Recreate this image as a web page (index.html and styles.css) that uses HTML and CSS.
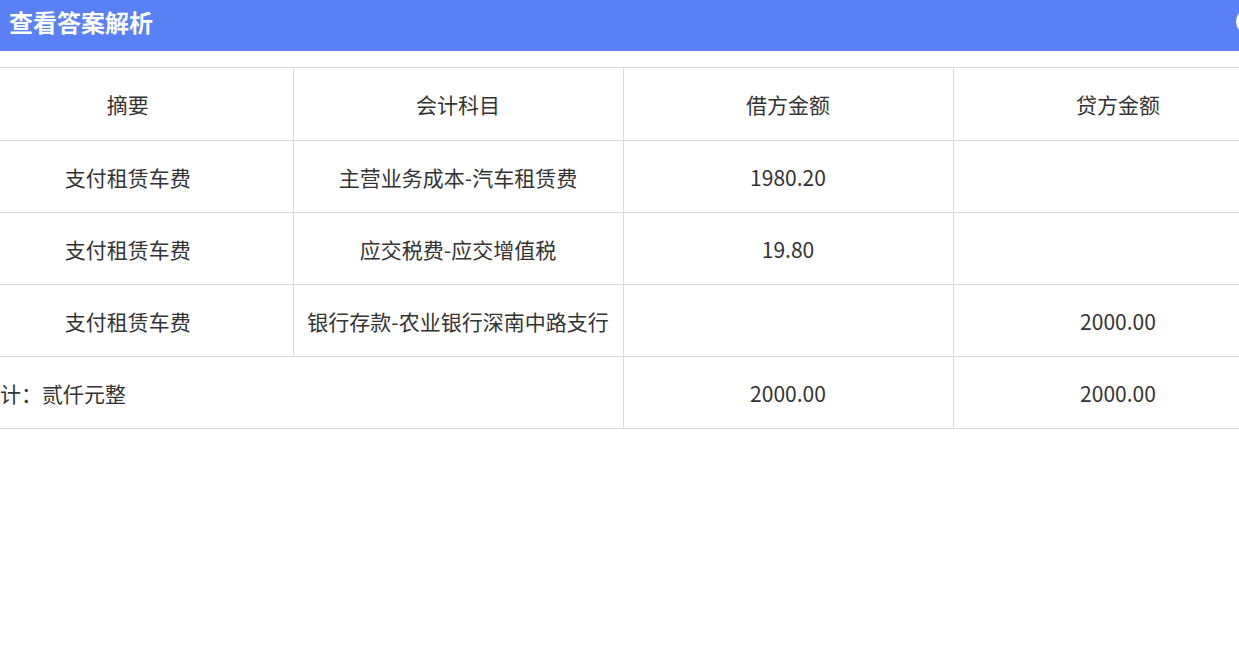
FILE: index.html
```html
<!DOCTYPE html>
<html lang="zh-CN">
<head>
<meta charset="utf-8">
<link rel="stylesheet" href="styles.css">
</head>
<body>
<div class="dialog">
  <div class="header">
    <span class="title">查看答案解析</span>
    <span class="close"></span>
  </div>
  <div class="body">
    <table class="voucher">
      <colgroup><col class="c"><col class="c"><col class="c"><col class="c"></colgroup>
      <thead>
        <tr><th>摘要</th><th>会计科目</th><th>借方金额</th><th>贷方金额</th></tr>
      </thead>
      <tbody>
        <tr><td>支付租赁车费</td><td>主营业务成本-汽车租赁费</td><td>1980.20</td><td></td></tr>
        <tr><td>支付租赁车费</td><td>应交税费-应交增值税</td><td>19.80</td><td></td></tr>
        <tr><td>支付租赁车费</td><td>银行存款-农业银行深南中路支行</td><td></td><td>2000.00</td></tr>
        <tr class="total"><td colspan="2" class="total-label">合计：贰仟元整</td><td>2000.00</td><td>2000.00</td></tr>
      </tbody>
    </table>
  </div>
</div>
</body>
</html>
```

FILE: styles.css
```css
html, body {
  margin: 0;
  padding: 0;
  background: #fff;
  overflow: hidden;
}
body {
  font-family: "Noto Sans CJK SC", "Noto Sans", sans-serif;
  color: #333;
}
.dialog {
  width: 1239px;
  height: 666px;
  position: relative;
  overflow: hidden;
}
.header {
  height: 51px;
  box-sizing: border-box;
  background: #5a80f6;
  display: flex;
  align-items: flex-start;
  padding: 6px 0 0 9px;
  position: relative;
}
.title {
  color: #fff;
  font-size: 24px;
  line-height: 32px;
  font-weight: bold;
}
.close {
  position: absolute;
  left: 1236px;
  top: 8px;
  width: 27px;
  height: 27px;
  border-radius: 50%;
  background: #fff;
}
.body {
  padding-top: 16px;
  margin-left: -37px;
}
.voucher {
  border-collapse: collapse;
  table-layout: fixed;
  width: 1320px;
}
.voucher .c {
  width: 330px;
}
.voucher th, .voucher td {
  height: 71px;
  padding: 0;
  border: 1px solid #dcdcdc;
  text-align: center;
  font-size: 21px;
  font-weight: normal;
  color: #333;
}
.voucher th {
  height: 72px;
}
.voucher tr > :first-child {
  border-left: none;
}
.voucher .total-label {
  text-align: left;
  padding-left: 16px;
}
```
